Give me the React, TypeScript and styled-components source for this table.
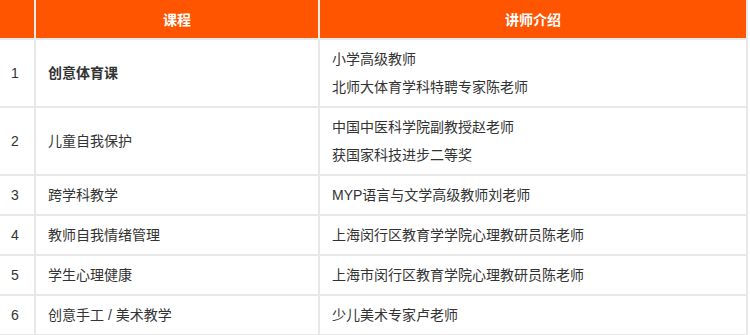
import React from "react";
import styled, { createGlobalStyle } from "styled-components";

const Global = createGlobalStyle`
  html, body { margin: 0; padding: 0; background: #fff; }
  body { font-family: "Liberation Sans", "Noto Sans CJK SC", sans-serif; }
`;

const Table = styled.table`
  width: 748px;
  border-collapse: collapse;
  table-layout: fixed;
  font-size: 14px;
  color: #333;
  border-bottom: 2px solid #e8e8e8;
  border-right: 2px solid #e8e8e8;
`;

const HeadCell = styled.th`
  background: #ff5500;
  color: #fff;
  font-weight: bold;
  height: 38px;
  padding: 0;
  text-align: center;
  border-left: 2px solid #ececec;
  &:first-child { border-left: none; }
`;

const Cell = styled.td<{ $strong?: boolean }>`
  padding: 5px 12px;
  line-height: 28px;
  vertical-align: middle;
  text-align: left;
  font-weight: ${(p) => (p.$strong ? "bold" : "normal")};
  border-top: 2px solid #e8e8e8;
  border-left: 2px solid #e8e8e8;
  &:first-child { border-left: none; padding-left: 11px; }
`;

const Line = styled.div``;

const rows: { course: string; lecturer: string[]; strong?: boolean }[] = [
  { course: "创意体育课", lecturer: ["小学高级教师", "北师大体育学科特聘专家陈老师"], strong: true },
  { course: "儿童自我保护", lecturer: ["中国中医科学院副教授赵老师", "获国家科技进步二等奖"] },
  { course: "跨学科教学", lecturer: ["MYP语言与文学高级教师刘老师"] },
  { course: "教师自我情绪管理", lecturer: ["上海闵行区教育学学院心理教研员陈老师"] },
  { course: "学生心理健康", lecturer: ["上海市闵行区教育学院心理教研员陈老师"] },
  { course: "创意手工 / 美术教学", lecturer: ["少儿美术专家卢老师"] },
];

export default function App() {
  return (
    <>
      <Global />
      <Table>
        <colgroup>
          <col style={{ width: 35 }} />
          <col style={{ width: 284 }} />
          <col />
        </colgroup>
        <thead>
          <tr>
            <HeadCell></HeadCell>
            <HeadCell>课程</HeadCell>
            <HeadCell>讲师介绍</HeadCell>
          </tr>
        </thead>
        <tbody>
          {rows.map((r, i) => (
            <tr key={i}>
              <Cell>{i + 1}</Cell>
              <Cell $strong={r.strong}>{r.course}</Cell>
              <Cell>
                {r.lecturer.map((l, j) => (
                  <Line key={j}>{l}</Line>
                ))}
              </Cell>
            </tr>
          ))}
        </tbody>
      </Table>
    </>
  );
}
